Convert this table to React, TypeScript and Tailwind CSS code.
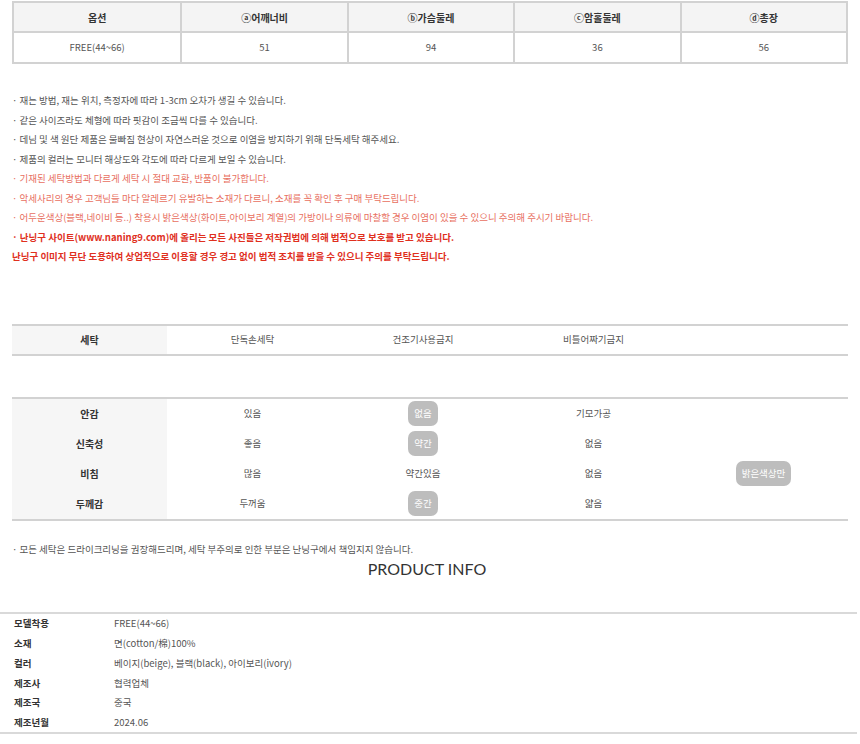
import React from "react";

const F = { fontFamily: '"Noto Sans CJK KR", "Noto Sans", sans-serif' };

const notes: { t: string; c: string }[] = [
  { t: "· 재는 방법, 재는 위치, 측정자에 따라 1-3cm 오차가 생길 수 있습니다.", c: "text-[#555]" },
  { t: "· 같은 사이즈라도 체형에 따라 핏감이 조금씩 다를 수 있습니다.", c: "text-[#555]" },
  { t: "· 데님 및 색 원단 제품은 물빠짐 현상이 자연스러운 것으로 이염을 방지하기 위해 단독세탁 해주세요.", c: "text-[#555]" },
  { t: "· 제품의 컬러는 모니터 해상도와 각도에 따라 다르게 보일 수 있습니다.", c: "text-[#555]" },
  { t: "· 기재된 세탁방법과 다르게 세탁 시 절대 교환, 반품이 불가합니다.", c: "text-[#e8705f]" },
  { t: "· 악세사리의 경우 고객님들 마다 알레르기 유발하는 소재가 다르니, 소재를 꼭 확인 후 구매 부탁드립니다.", c: "text-[#e8705f]" },
  { t: "· 어두운색상(블랙,네이비 등..) 착용시 밝은색상(화이트,아이보리 계열)의 가방이나 의류에 마찰할 경우 이염이 있을 수 있으니 주의해 주시기 바랍니다.", c: "text-[#e8705f]" },
  { t: "· 난닝구 사이트(www.naning9.com)에 올리는 모든 사진들은 저작권법에 의해 법적으로 보호를 받고 있습니다.", c: "text-[#e0301e] font-bold" },
  { t: "난닝구 이미지 무단 도용하여 상업적으로 이용할 경우 경고 없이 법적 조치를 받을 수 있으니 주의를 부탁드립니다.", c: "text-[#e0301e] font-bold" },
];

const Badge = ({ children }: { children: React.ReactNode }) => (
  <span className="inline-flex items-center justify-center rounded-[7px] bg-[#bdbdbd] text-white px-[6px] h-[25px] text-[9.5px]">
    {children}
  </span>
);

const props: { label: string; cells: (string | { b: string })[] }[] = [
  { label: "안감", cells: ["있음", { b: "없음" }, "기모가공", ""] },
  { label: "신축성", cells: ["좋음", { b: "약간" }, "없음", ""] },
  { label: "비침", cells: ["많음", "약간있음", "없음", { b: "밝은색상만" }] },
  { label: "두께감", cells: ["두꺼움", { b: "중간" }, "얇음", ""] },
];

const info: [string, string][] = [
  ["모델착용", "FREE(44~66)"],
  ["소재", "면(cotton/棉)100%"],
  ["컬러", "베이지(beige), 블랙(black), 아이보리(ivory)"],
  ["제조사", "협력업체"],
  ["제조국", "중국"],
  ["제조년월", "2024.06"],
];

export default function App() {
  const headers = ["옵션", "ⓐ어깨너비", "ⓑ가슴둘레", "ⓒ암홀둘레", "ⓓ총장"];
  const vals = ["FREE(44~66)", "51", "94", "36", "56"];
  return (
    <div className="w-[860px] h-[744px] bg-white overflow-hidden text-[#555]" style={F}>
      {/* size table */}
      <div className="ml-[12px] mt-[1px] w-[836px] border-2 border-[#d2d2d2]">
        <div className="grid grid-cols-5 h-[30px] bg-[#f4f4f4] border-b-2 border-[#d2d2d2]">
          {headers.map((h, i) => (
            <div
              key={i}
              className={`flex items-center justify-center text-[10px] font-bold text-[#333] ${i > 0 ? "border-l-2 border-[#d2d2d2]" : ""}`}
            >
              {h}
            </div>
          ))}
        </div>
        <div className="grid grid-cols-5 h-[29px]">
          {vals.map((v, i) => (
            <div
              key={i}
              className={`flex items-center justify-center text-[9.5px] text-[#555] ${i > 0 ? "border-l-2 border-[#d2d2d2]" : ""}`}
            >
              {v}
            </div>
          ))}
        </div>
      </div>

      {/* notes */}
      <div className="mt-[27px] ml-[12px] flex flex-col">
        {notes.map((n, i) => (
          <div key={i} className={`h-[19.5px] leading-[19.5px] text-[9.5px] whitespace-nowrap ${n.c}`}>
            {n.t}
          </div>
        ))}
      </div>

      {/* washing */}
      <div className="mt-[57px] ml-[12px] w-[836px] border-y-2 border-[#d2d2d2] grid grid-cols-[155px_171px_170px_171px_1fr] h-[32px]">
        <div className="bg-[#f6f6f6] flex items-center justify-center text-[10px] font-bold text-[#333]">세탁</div>
        <div className="flex items-center justify-center text-[9.5px]">단독손세탁</div>
        <div className="flex items-center justify-center text-[9.5px]">건조기사용금지</div>
        <div className="flex items-center justify-center text-[9.5px]">비틀어짜기금지</div>
        <div />
      </div>

      {/* properties */}
      <div className="mt-[41px] ml-[12px] w-[836px] border-y-2 border-[#d2d2d2] grid grid-cols-[155px_171px_170px_171px_1fr]">
        {props.map((r, ri) => (
          <React.Fragment key={ri}>
            <div className="bg-[#f6f6f6] h-[30px] flex items-center justify-center text-[10px] font-bold text-[#333]">
              {r.label}
            </div>
            {r.cells.map((c, ci) => (
              <div key={ci} className="h-[30px] flex items-center justify-center text-[9.5px]">
                {typeof c === "string" ? c : <Badge>{c.b}</Badge>}
              </div>
            ))}
          </React.Fragment>
        ))}
      </div>

      <div className="mt-[18px] ml-[12px] h-[20px] leading-[20px] text-[9.5px]">
        · 모든 세탁은 드라이크리닝을 권장해드리며, 세탁 부주의로 인한 부분은 난닝구에서 책임지지 않습니다.
      </div>
      <div
        className="h-[20px] leading-[20px] text-center text-[16px] text-[#333] pr-[6px]"
        style={{ fontFamily: 'Lato, "Open Sans", sans-serif' }}
      >
        PRODUCT INFO
      </div>

      {/* product info */}
      <div className="mt-[33px] w-[857px] border-y-2 border-[#d9d9d9] py-[0px]">
        {info.map(([k, v], i) => (
          <div key={i} className="flex h-[19.8px] items-center">
            <div className="w-[114px] pl-[14px] text-[9.5px] font-bold text-[#333]">{k}</div>
            <div className="text-[9.5px] text-[#555]">{v}</div>
          </div>
        ))}
      </div>
    </div>
  );
}
